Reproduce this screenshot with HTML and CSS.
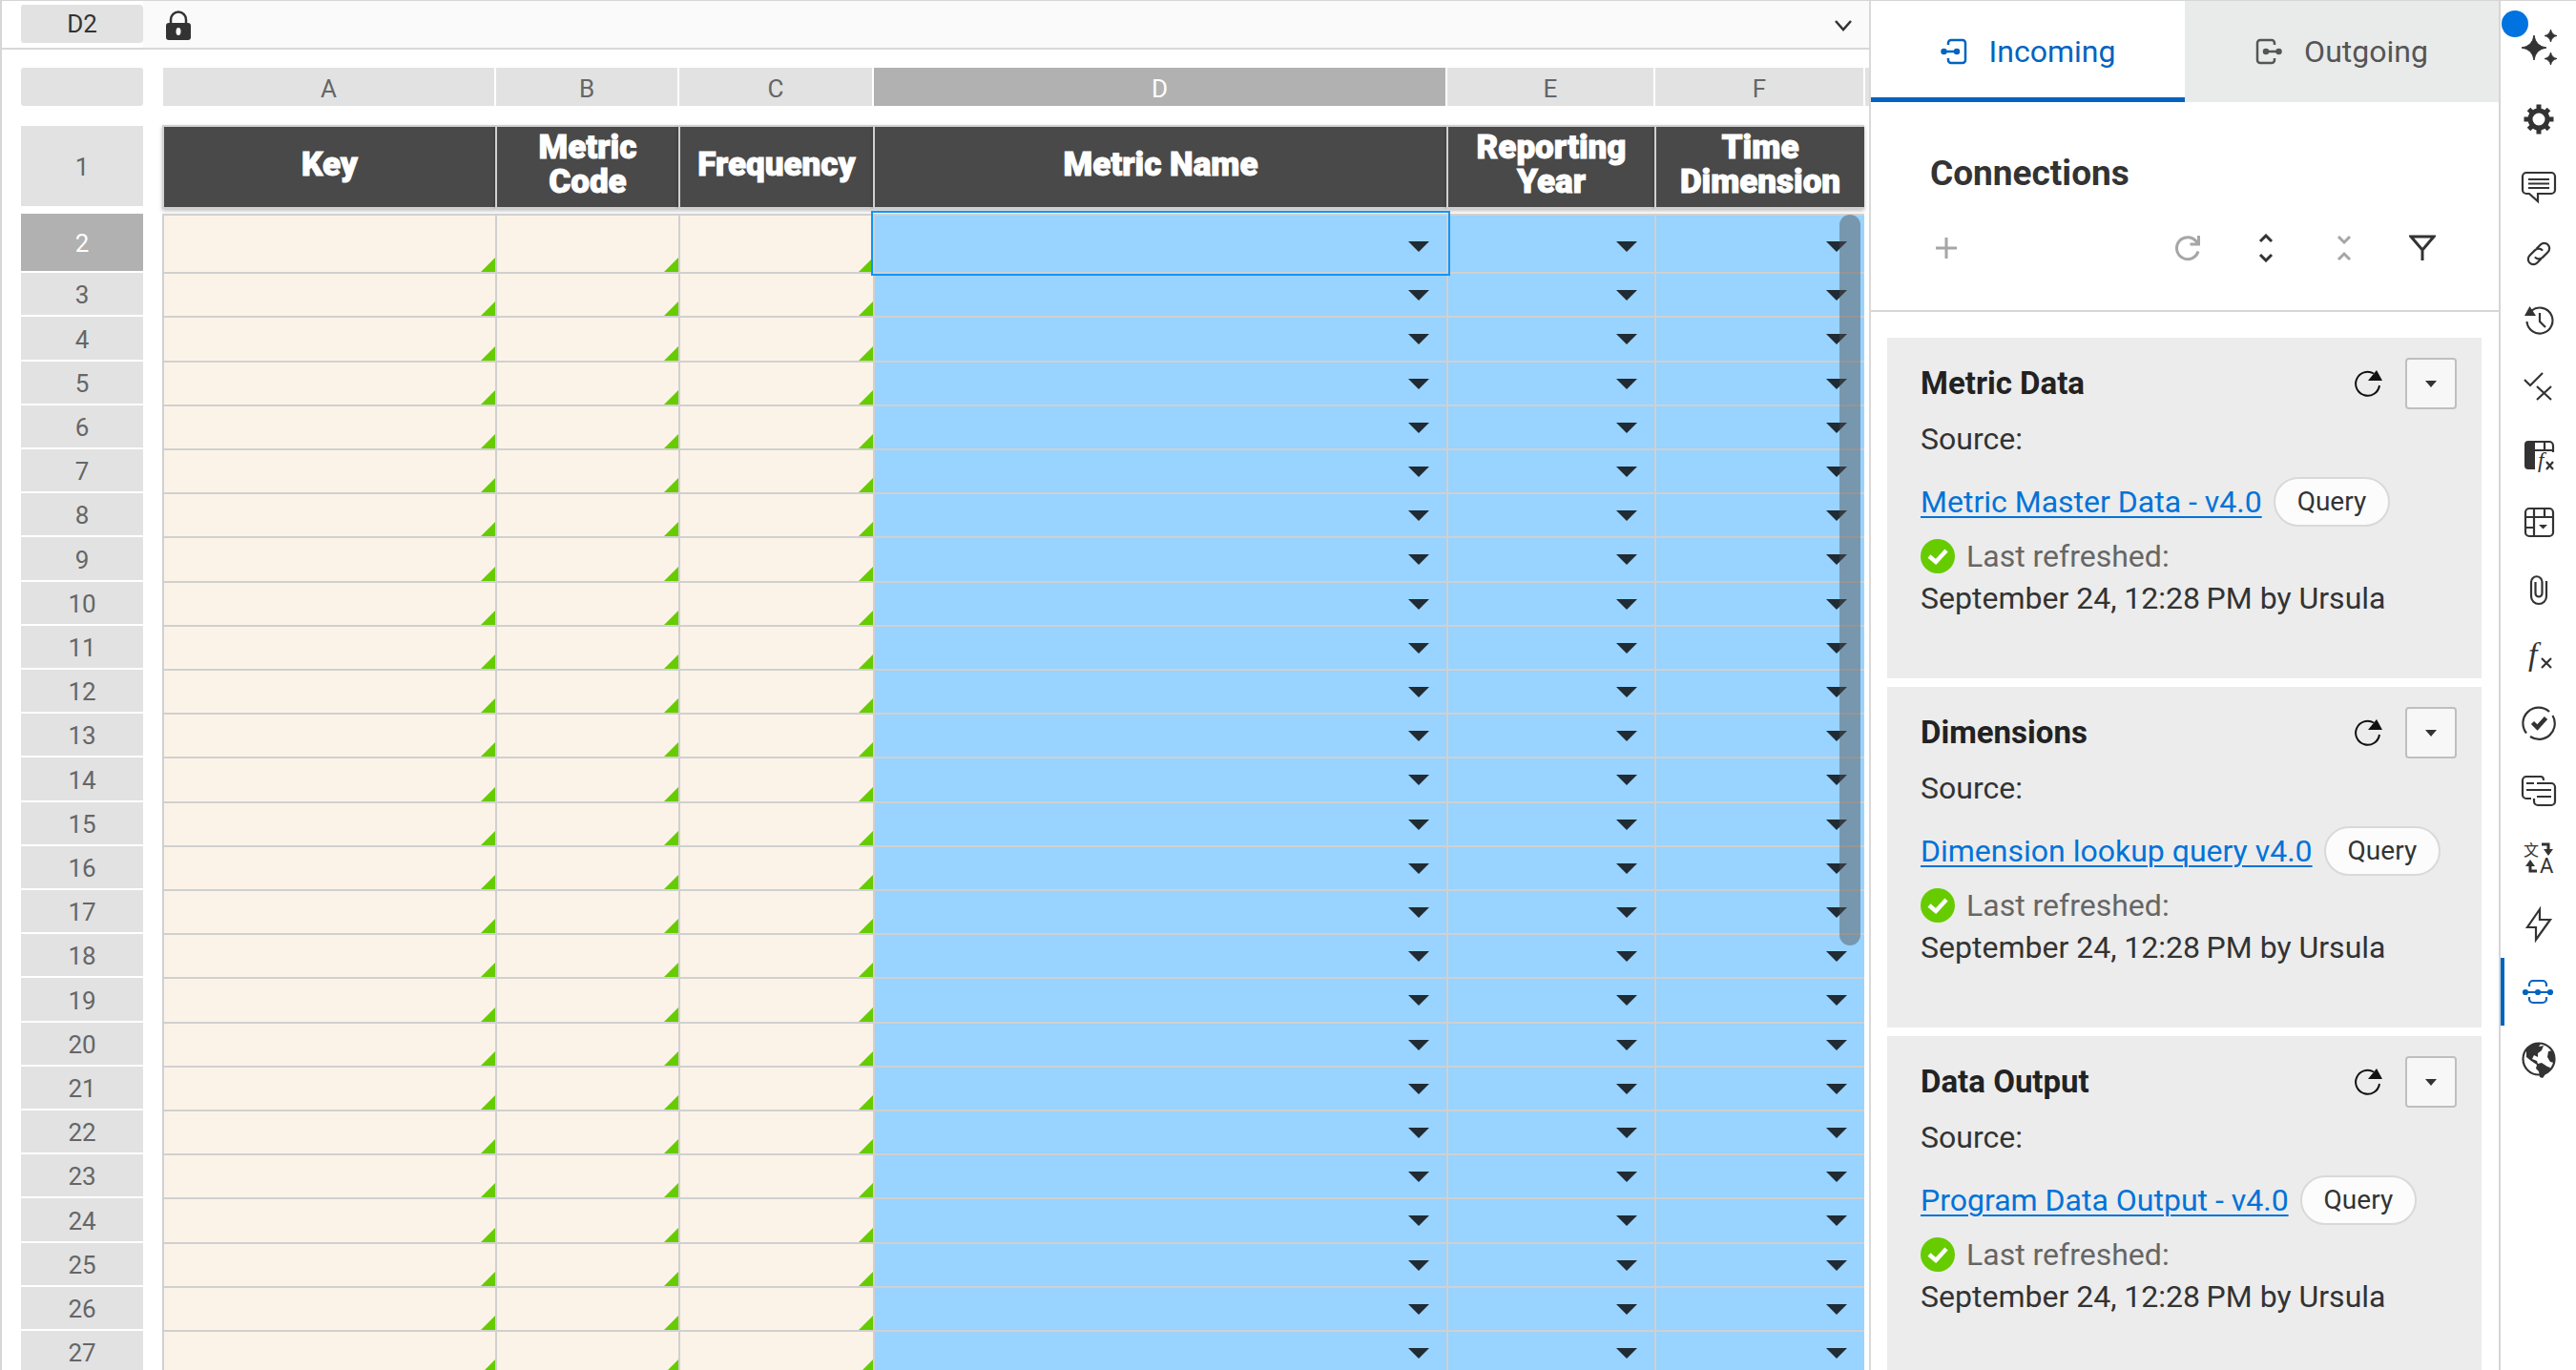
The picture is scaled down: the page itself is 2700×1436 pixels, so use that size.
FILE: index.html
```html
<!DOCTYPE html>
<html lang="en">
<head>
    <meta charset="UTF-8">
    <title>Metric Data</title>
    <link rel="stylesheet" href="styles.css">
</head>
<body>
<div class="app">
    <main class="sheet">
        <div class="formula-bar">
            <div class="cell-name">D2</div>
            <div class="formula">
                <svg class="lock" width="26" height="32" viewBox="0 0 26 32"><path d="M5 14V9.500a8 8 0 0 1 16 0V14" fill="none" stroke="#333" stroke-width="2.500"/><rect y="13" width="26" height="18" rx="3" fill="#333"/><ellipse cx="13" cy="22" rx="2.500" ry="4" fill="#fff"/></svg>
                <button class="expand" aria-label="Expand formula bar"><svg width="20" height="14" viewBox="0 0 20 14"><path d="M2 2l8 9 8-9" fill="none" stroke="#333" stroke-width="2.500"/></svg></button>
            </div>
        </div>
        <div class="grid-wrap">
            <table class="grid">
                <colgroup><col class="c-num"><col class="c-gap"><col class="c-a"><col class="c-b"><col class="c-c"><col class="c-d"><col class="c-e"><col class="c-f"><col class="c-g"></colgroup>
                <thead>
                    <tr class="letters"><th class="corner"></th><td></td><th>A</th><th>B</th><th>C</th><th class="current">D</th><th>E</th><th>F</th><th class="last"></th></tr>
                    <tr class="space"><td colspan="9"></td></tr>
                    <tr class="titles"><th class="num">1</th><td></td><th>Key</th><th>Metric<br>Code</th><th>Frequency</th><th>Metric Name</th><th>Reporting<br>Year</th><th>Time<br>Dimension</th><td></td></tr>
                    <tr class="freeze"><td colspan="9"></td></tr>
                </thead>
                <tbody id="rows"></tbody>
            </table>
            <div class="scrollbar"></div>
        </div>
    </main>

    <section class="panel">
        <div class="tabs">
            <button class="tab active">
                <svg width="28" height="28" viewBox="0 0 28 28" fill="none" stroke="currentColor" stroke-width="2.500"><path d="M8 7V5a3 3 0 0 1 3-3h12a3 3 0 0 1 3 3v18a3 3 0 0 1-3 3H11a3 3 0 0 1-3-3v-2M3 14h14"/><circle cx="3.500" cy="14" r="2" fill="currentColor"/><circle cx="17" cy="14" r="2" fill="currentColor"/></svg>
                Incoming
            </button>
            <button class="tab">
                <svg width="28" height="28" viewBox="0 0 28 28" fill="none" stroke="currentColor" stroke-width="2.500"><path d="M20 7V5a3 3 0 0 0-3-3H5a3 3 0 0 0-3 3v18a3 3 0 0 0 3 3h12a3 3 0 0 0 3-3v-2M11 14h14"/><circle cx="11" cy="14" r="2" fill="currentColor"/><circle cx="24.500" cy="14" r="2" fill="currentColor"/></svg>
                Outgoing
            </button>
        </div>
        <div class="panel-head">
            <h2>Connections</h2>
            <div class="tools">
                <button class="off add" aria-label="Add"><svg width="28" height="28" viewBox="0 0 28 28"><path d="M14 3v22M3 14h22"/></svg></button>
                <button class="off" aria-label="Refresh all"><svg width="28" height="28" viewBox="0 0 28 28"><path d="M25 17.500A11.500 11.500 0 1 1 23 7l2 2M25.500 1v9h-9"/></svg></button>
                <button aria-label="Expand all"><svg width="28" height="30" viewBox="0 0 28 30"><path d="M8 8l6-6 6 6M8 22l6 6 6-6"/></svg></button>
                <button class="off" aria-label="Collapse all"><svg width="28" height="28" viewBox="0 0 28 28"><path d="M8 2l6 6 6-6M8 26l6-6 6 6"/></svg></button>
                <button aria-label="Filter"><svg width="28" height="28" viewBox="0 0 28 28"><path d="M2 2h24L14 16zM14 14v13" /></svg></button>
            </div>
        </div>
        <div class="cards" id="cards"></div>
    </section>

    <nav class="rail">
        <button aria-label="Assistant"><span class="dot"></span>
            <svg viewBox="0 0 40 40"><path class="f" d="M15 7Q16.500 18.500 28 20 16.500 21.500 15 33 13.500 21.500 2 20 13.500 18.500 15 7zM32.500 1Q33.500 6.500 39 7.500 33.500 8.500 32.500 14 31.500 8.500 26 7.500 31.500 6.500 32.500 1zM32.500 25Q33.500 30.500 39 31.500 33.500 32.500 32.500 38 31.500 32.500 26 31.500 31.500 30.500 32.500 25z" stroke-width="1"/></svg></button>
        <button aria-label="Settings"><svg viewBox="0 0 40 40"><path d="M20 4.500v31M4.500 20h31M9.500 9.500l21 21M30.500 9.500l-21 21" stroke-width="5"/><circle cx="20" cy="20" r="9" fill="#fff" stroke-width="5"/></svg></button>
        <button aria-label="Comments"><svg viewBox="0 0 40 40"><path d="M7 5h26a4 4 0 0 1 4 4v14a4 4 0 0 1-4 4H19v8l-9-8H7a4 4 0 0 1-4-4V9a4 4 0 0 1 4-4zM9 12h22M9 16.500h22M9 21h22"/></svg></button>
        <button aria-label="Links"><svg viewBox="0 0 40 40"><g transform="rotate(-45 20 20)"><path d="M18 25.500h-6a5.500 5.500 0 0 1 0-11h8a5.500 5.500 0 0 1 5.300 6M22 14.500h6a5.500 5.500 0 0 1 0 11h-8a5.500 5.500 0 0 1-5.300-6"/></g></svg></button>
        <button aria-label="History"><svg viewBox="0 0 40 40"><path d="M7.500 21a13.500 13.500 0 1 0 5-11.500M21 12v9l6 6"/><path class="f" d="M5 15l5.500-10 6.500 10z" stroke="none"/></svg></button>
        <button aria-label="Validation"><svg viewBox="0 0 40 40"><path d="M5 11l6 6L24 4M18 18l15 14M33 18L18 32"/></svg></button>
        <button aria-label="Table formulas"><svg viewBox="0 0 40 40"><path class="f" d="M5 9a4 4 0 0 1 4-4h7v30H9a4 4 0 0 1-4-4z" stroke="none"/><path d="M14 6h17a4 4 0 0 1 4 4v7M15 15h19M26 6v9M28 27l7 8M35 27l-7 8"/><text class="t serif" x="19" y="33" font-size="23">f</text></svg></button>
        <button aria-label="Pivot table"><svg viewBox="0 0 40 40"><rect x="6" y="6" width="29" height="29" rx="4"/><path d="M15 6v29M6 15h29M26 6v9M6 26h9"/><path class="f" d="M20 23h9l-4.500 4.500z" stroke="none"/></svg></button>
        <button aria-label="Attachments"><svg viewBox="0 0 40 40"><path d="M28 11v16a8 8 0 0 1-16 0V12a5.500 5.500 0 0 1 11.500 0v12a3.500 3.500 0 0 1-7 0V12"/></svg></button>
        <button aria-label="Functions"><svg viewBox="0 0 40 40"><text class="t serif" x="9" y="29" font-size="34">f</text><path d="M23 22l10 10M33 22L23 32"/></svg></button>
        <button aria-label="Checks"><svg viewBox="0 0 40 40"><path d="M7 30.500A16.500 16.500 0 0 1 31 8M34.500 12A16.500 16.500 0 0 1 11 34"/><path d="M13.500 19.500l5 5 9-10" stroke-width="4.500"/></svg></button>
        <button aria-label="Notes"><svg viewBox="0 0 40 40"><path d="M12 28H7a4 4 0 0 1-4-4V9a4 4 0 0 1 4-4h15q3 0 3 4M7 12h8M18 12h15a4 4 0 0 1 4 4v15a4 4 0 0 1-4 4H19a4 4 0 0 1-4-4v-3M7 19h26M18 26h15"/></svg></button>
        <button aria-label="Translate"><svg viewBox="0 0 40 40"><text class="t cjk" x="4" y="18" font-size="16">文</text><text class="t" x="21" y="36" font-size="22">A</text><path d="M23 6h7v6M18 34h-7v-7" stroke-width="3"/><path class="f" d="M25 11h10l-5 7zM6 29h10l-5-7z" stroke="none"/></svg></button>
        <button aria-label="Automation"><svg viewBox="0 0 40 40"><path d="M21 4L8 23h9v13l15-21H21z"/></svg></button>
        <button class="active" aria-label="Connections"><svg viewBox="0 0 40 40"><path d="M10 14v-2a4 4 0 0 1 4-4h10a4 4 0 0 1 4 4v2M10 25v2a4 4 0 0 0 4 4h10a4 4 0 0 0 4-4v-2M6 20h27"/><circle class="f" cx="6" cy="20" r="2"/><circle class="f" cx="19" cy="20" r="2"/><circle class="f" cx="32" cy="20" r="2"/></svg></button>
        <button aria-label="Publish"><svg viewBox="0 0 40 40"><circle cx="20" cy="20" r="16.500"/><path class="f" d="M7 10q7-8 15-6l-2 3 5-1-2 5-4 3v4l-4-2-2 4 5 2 1 3 4-1 6 4 3 1-1 4-4 3-3 4-3-1-1-6-3-3 1-4-6-4-5-4zM30 12l5-1 2 8-1 5-4-1-3-5z" stroke="none"/></svg></button>
    </nav>
</div>
<script src="app.js"></script>
</body>
</html>
```
FILE: styles.css
```css
*{box-sizing:border-box;}
body{margin:0; font-family:Roboto, "Noto Sans", sans-serif; font-size:32px; color:#333; background:#fff;}
button{padding:0; border:0; background:none; font:inherit; color:inherit;}
svg{display:block;}
.app{display:grid; grid-template-columns:minmax(0,1fr) 660px 81px; height:100vh; overflow:hidden; border-top:1px solid #d6d6d6;}

/* spreadsheet */
.sheet{display:flex; flex-direction:column; overflow:hidden; border-left:2px solid #d6d6d6;}
.formula-bar{display:flex; flex:none; height:51px; padding-left:18px; border-bottom:2px solid #d8d8d8;}
.cell-name{width:130px; height:40px; margin-top:4px; border-left:2px solid #fff; border-radius:4px; background:#e2e2e2; font-size:26px; line-height:40px; text-align:center;}
.formula{display:flex; flex:1; align-items:center; justify-content:space-between; padding:2px 17px 0 24px; background:#fafafa;}
.grid-wrap{position:relative; margin-top:19px; padding-left:20px;}
.grid{width:100%; table-layout:fixed; border-spacing:0;}
.grid th, .grid td{padding:0;}
.c-num{width:128px;}
.c-gap{width:20px;}
.c-a{width:349px;}
.c-b{width:192px;}
.c-c{width:204px;}
.c-e{width:218px;}
.c-f{width:220px;}
.c-g{width:5px;}
.letters{height:40px;}
.grid .letters th{padding-top:4px; border:solid #fff; border-width:0 1px; background:#e2e2e2; color:#666; font-size:26px; font-weight:400; line-height:36px;}
.grid .letters .corner{border:0; border-radius:3px;}
.grid .letters .last{border-right:0;}
.grid .letters .current, .grid .num.current{background:#b1b1b1; color:#fff;}
.space{height:20px;}
.freeze{height:5px;}
.titles{height:88px;}
.grid .titles th{padding-bottom:4px; border:2px solid #d0d0d0; border-right:0; background:#494949; color:#fff; font-size:35px; font-weight:900; line-height:36px; box-shadow:0 2px 4px rgba(0,0,0,.25); -webkit-text-stroke:1px #fff;}
.grid .num, .grid .titles .num{padding:2px 0 0; border:0; border-bottom:2px solid #fff; background:#e2e2e2; background-clip:padding-box; color:#666; font-size:26px; font-weight:400; line-height:30px; box-shadow:none; -webkit-text-stroke:0;}
.grid .titles .num{border-top:1px solid #fff; border-bottom-width:3px;}
.grid .num.current{background:#b1b1b1; background-clip:padding-box; color:#fff;}
#rows tr{height:46px;}
#rows tr:nth-child(5n+3){height:47px;}
#rows tr:first-child{height:62px;}
.cell{position:relative; border:solid #d0d0d0; border-width:1px 0 1px 2px;}
#rows tr:first-child .cell{border-top-width:2px;}
.locked{background:#fcf3e8;}
.locked::after{content:""; position:absolute; right:0; bottom:0; border-left:15px solid transparent; border-bottom:15px solid #6c0;}
.picker{background:#99d3ff;}
.picker button{display:flex; width:100%; align-items:center; justify-content:flex-end; padding-right:18px;}
.picker button::after{content:""; border:solid transparent; border-width:11px 11px 0; border-top-color:#202b33;}
#rows tr:first-child button{padding-top:5px;}
.selected::before{content:""; position:absolute; z-index:1; top:-5px; right:-4px; bottom:-4px; left:-4px; border:2px solid #0a96ff;}
.scrollbar{position:absolute; top:154px; right:9px; width:22px; height:766px; border-radius:11px; background:rgba(77,77,77,.45);}

/* connections panel */
.panel{display:flex; flex-direction:column; overflow:hidden; border-left:2px solid #d9d9d9;}
.tabs{display:flex; flex:none; height:106px;}
.tab{display:flex; flex:1; align-items:center; justify-content:center; gap:23px; background:#e9ebea; color:#555;}
.tab.active{border-bottom:5px solid #0064bf; border-top:5px solid transparent; background:#fff; color:#0064bf;}
.panel-head{flex:none; height:220px; padding:53px 62px 0; border-bottom:2px solid #d6d6d6;}
.panel-head h2{margin:0; font-size:37px; line-height:44px;}
.tools{display:flex; align-items:center; gap:54px; height:30px; margin:41px 4px 0 3px; color:#333;}
.tools svg{fill:none; stroke:currentColor; stroke-width:3;}
.tools .off{color:#a6a6a6;}
.tools .add{margin-right:auto;}
.cards{display:flex; flex-direction:column; gap:9px; padding:27px 18px 0 17px;}
.card{padding:21px 26px 62px 35px; background:#ececec; line-height:44px;}
.card-head{display:flex; align-items:center; gap:24px;}
.card-head h3{flex:1; margin:0; color:#222; font-size:33px;}
.menu{display:flex; align-items:center; justify-content:center; width:54px; height:54px; border:2px solid #bfbfbf; border-radius:4px; background:#f7f7f7;}
.menu::after{content:""; border:solid transparent; border-width:7px 6px 0; border-top-color:#333;}
.source{margin:9px 0 18px;}
.from{display:flex; align-items:center; gap:12px;}
.from a{color:#0073d8; text-underline-offset:4px; text-decoration-thickness:2px;}
.pill{padding:0 23px; border:2px solid #d9d9d9; border-radius:26px; background:#fcfcfc; font-size:28px; line-height:48px;}
.status{display:flex; align-items:center; gap:12px; margin-top:9px; color:#666;}
.when{margin:0;}

/* icon rail */
.rail{display:flex; flex-direction:column; padding-top:16px; border-left:2px solid #d6d6d6;}
.rail button{position:relative; display:flex; flex:none; align-items:center; justify-content:center; height:70px; color:#333;}
.rail button:first-child{height:73px; padding-bottom:8px;}
.rail button:nth-child(3n){height:71px;}
.rail .active{color:#0064bf;}
.rail .active::before{content:""; position:absolute; top:0; bottom:0; left:0; width:4px; background:#0064bf;}
.rail svg{width:40px; height:40px; fill:none; stroke:currentColor; stroke-width:2.2;}
.rail .f{fill:currentColor;}
.rail .t{fill:currentColor; stroke:none;}
.rail .serif{font-family:"Liberation Serif", serif; font-style:italic;}
.rail .cjk{font-family:"Noto Sans CJK SC", sans-serif;}
.dot{position:absolute; top:-6px; left:1px; width:28px; height:28px; border-radius:50%; background:#0073e0;}
```
FILE: app.js
```js
var rows = document.getElementById("rows");
var locked = '<td class="cell locked"></td>';
var html = "";
for (var i = 2; i <= 27; i++) {
    html += "<tr>";
    html += '<th class="num' + (i == 2 ? " current" : "") + '">' + i + "</th><td></td>";
    html += locked + locked + locked;
    for (var j = 0; j < 3; j++) {
        var sel = i == 2 && j == 0 ? " selected" : "";
        html += '<td class="cell picker' + sel + '"><button aria-label="' + "DEF"[j] + i + ' options"></button></td>';
    }
    html += "<td></td></tr>";
}
rows.innerHTML = html;

var sources = [
    ["Metric Data", "Metric Master Data - v4.0"],
    ["Dimensions", "Dimension lookup query v4.0"],
    ["Data Output", "Program Data Output - v4.0"]
];
var reload = '<svg width="30" height="30" viewBox="0 0 30 30"><path d="M27 17A12.500 12.500 0 1 1 21 4.500" fill="none" stroke="#111" stroke-width="2"/><path d="M24 1v11h-9z" fill="#111"/><path d="M24 1l6 11h-6z" fill="#111"/></svg>';
var tick = '<svg width="36" height="36" viewBox="0 0 36 36"><circle cx="18" cy="18" r="18" fill="#6c0"/><path d="M9 18l7 6 11-12" fill="none" stroke="#fff" stroke-width="4.500"/></svg>';
document.getElementById("cards").innerHTML = sources.map(function(s) {
    return '<article class="card">' +
        '<div class="card-head"><h3>' + s[0] + '</h3><button aria-label="Refresh">' + reload + '</button><button class="menu" aria-label="More"></button></div>' +
        '<div class="source">Source:</div>' +
        '<div class="from"><a href="#">' + s[1] + '</a><span class="pill">Query</span></div>' +
        '<div class="status">' + tick + 'Last refreshed:</div>' +
        '<p class="when">September 24, 12:28&#8201;PM by Ursula</p>' +
        '</article>';
}).join("");
```
